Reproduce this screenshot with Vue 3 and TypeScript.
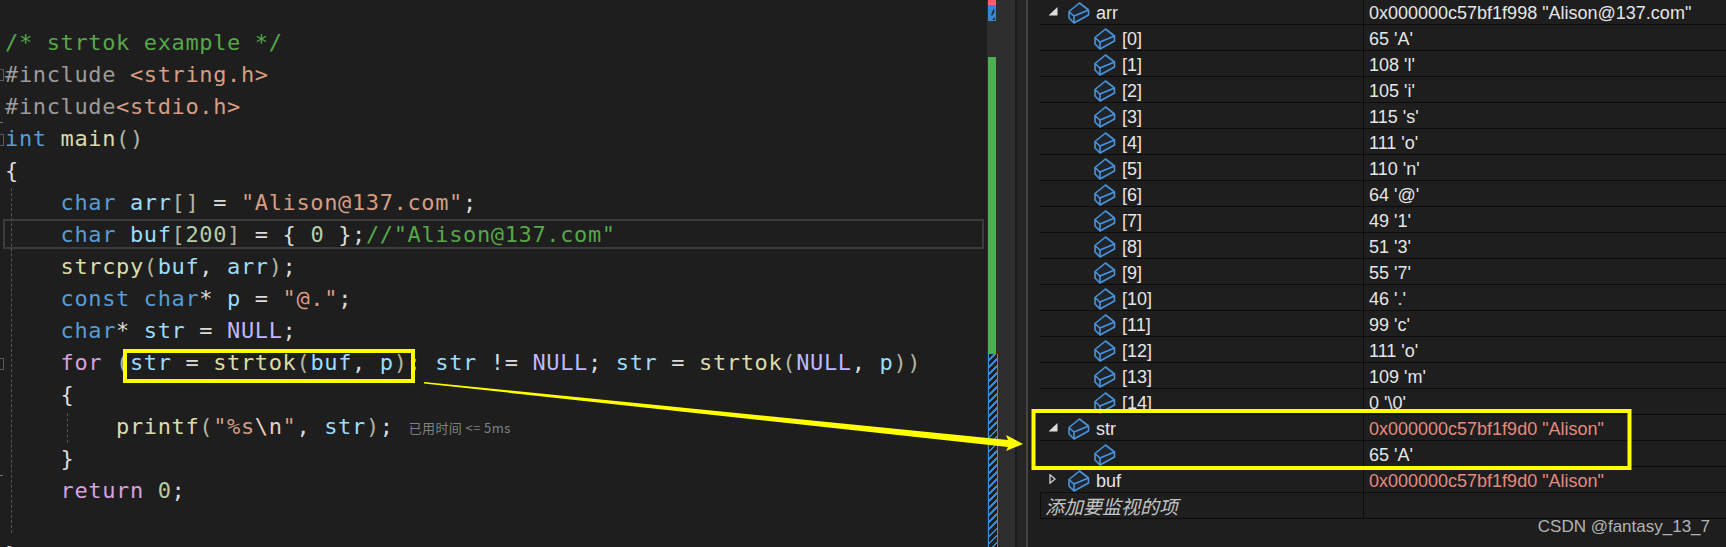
<script setup lang="ts">
type Tok = [string, string];
const code: Tok[][] = [
  [["c", "/* strtok example */"]],
  [["pp", "#include "], ["s", "<string.h>"]],
  [["pp", "#include"], ["s", "<stdio.h>"]],
  [["k", "int"], ["p", " "], ["f", "main"], ["b", "()"]],
  [["p", "{"]],
  [["p", "    "], ["k", "char"], ["p", " "], ["v", "arr"], ["b", "[]"], ["p", " = "], ["s", "\"Alison@137.com\""], ["p", ";"]],
  [["p", "    "], ["k", "char"], ["p", " "], ["v", "buf"], ["b", "["], ["n", "200"], ["b", "]"], ["p", " = { "], ["n", "0"], ["p", " };"], ["c", "//\"Alison@137.com\""]],
  [["p", "    "], ["f", "strcpy"], ["b", "("], ["v", "buf"], ["p", ", "], ["v", "arr"], ["b", ")"], ["p", ";"]],
  [["p", "    "], ["k", "const"], ["p", " "], ["k", "char"], ["p", "* "], ["v", "p"], ["p", " = "], ["s", "\"@.\""], ["p", ";"]],
  [["p", "    "], ["k", "char"], ["p", "* "], ["v", "str"], ["p", " = "], ["m", "NULL"], ["p", ";"]],
  [["p", "    "], ["r", "for"], ["p", " "], ["b", "("], ["v", "str"], ["p", " = "], ["f", "strtok"], ["b", "("], ["v", "buf"], ["p", ", "], ["v", "p"], ["b", ")"], ["p", "; "], ["v", "str"], ["p", " != "], ["m", "NULL"], ["p", "; "], ["v", "str"], ["p", " = "], ["f", "strtok"], ["b", "("], ["m", "NULL"], ["p", ", "], ["v", "p"], ["b", "))"]],
  [["p", "    {"]],
  [["p", "        "], ["f", "printf"], ["b", "("], ["s", "\"%s"], ["e", "\\n"], ["s", "\""], ["p", ", "], ["v", "str"], ["b", ")"], ["p", ";"]],
  [["p", "    }"]],
  [["p", "    "], ["r", "return"], ["p", " "], ["n", "0"], ["p", ";"]],
  [["p", " "]],
  [["p", "}"]],
];

interface Row { name: string; value: string; level: number; tri?: "open" | "closed"; changed?: boolean }
const chars: [string, string][] = [
  ["[0]", "65 'A'"], ["[1]", "108 'l'"], ["[2]", "105 'i'"], ["[3]", "115 's'"], ["[4]", "111 'o'"],
  ["[5]", "110 'n'"], ["[6]", "64 '@'"], ["[7]", "49 '1'"], ["[8]", "51 '3'"], ["[9]", "55 '7'"],
  ["[10]", "46 '.'"], ["[11]", "99 'c'"], ["[12]", "111 'o'"], ["[13]", "109 'm'"], ["[14]", "0 '\\0'"],
];
const rows: Row[] = [
  { name: "arr", value: "0x000000c57bf1f998 \"Alison@137.com\"", level: 0, tri: "open" },
  ...chars.map(([name, value]): Row => ({ name, value, level: 1 })),
  { name: "str", value: "0x000000c57bf1f9d0 \"Alison\"", level: 0, tri: "open", changed: true },
  { name: "", value: "65 'A'", level: 1 },
  { name: "buf", value: "0x000000c57bf1f9d0 \"Alison\"", level: 0, tri: "closed", changed: true },
];
</script>

<template>
  <div class="screen">
    <section class="editor">
      <div class="lines">
        <div v-for="(line, i) in code" :key="i" class="line" :class="{ current: i === 6 }">
          <span v-for="(t, j) in line" :key="j" :class="t[0]">{{ t[1] }}</span>
          <span v-if="i === 12" class="hint">已用时间 &lt;= 5ms</span>
        </div>
      </div>
      <i class="guide outer"></i>
      <i class="guide inner"></i>
      <i class="fold f1"></i>
      <i class="fold f2"></i>
      <i class="fold f3"></i>
      <i class="tick t1"></i>
      <i class="tick t2"></i>
    </section>

    <aside class="overview">
      <div class="mark red"></div>
      <div class="mark blue">
        <svg width="8" height="16" viewBox="0 0 8 16"><path d="M3 10 L6 3 L6.5 7 L4 11Z M4 15 L7 12 V15Z" fill="#1c2c3c" /></svg>
      </div>
      <div class="mark green"></div>
      <div class="mark hatch"></div>
    </aside>
    <div class="gap"></div>
    <div class="split"></div>

    <section class="watch">
      <div v-for="r in rows" :key="r.name + r.value" class="row">
        <div class="name" :class="'lv' + r.level">
          <span v-if="r.level === 0" class="tri">
            <svg width="10" height="10" viewBox="0 0 10 10">
              <path v-if="r.tri === 'open'" d="M9.5 1 V9.5 H0.5 Z" fill="#dcdcdc" />
              <path v-else d="M2 0.8 L7 5 L2 9.2 Z" fill="none" stroke="#c8c8c8" stroke-width="1.4" />
            </svg>
          </span>
          <svg class="cube" width="22" height="22" viewBox="0 0 22 22">
            <path d="M1 9.5 L11.5 1 L20.5 8 V13 L6 21 L1 16 Z" fill="#1f252d" stroke="#4a94dc" stroke-width="1.6" stroke-linejoin="round" />
            <path d="M1 9.5 L6 14 L20.5 8 M6 14 V21" fill="none" stroke="#4a94dc" stroke-width="1.6" />
          </svg>
          <span class="label">{{ r.name }}</span>
        </div>
        <div class="value" :class="{ changed: r.changed }">{{ r.value }}</div>
      </div>
      <div class="row add">
        <div class="name">添加要监视的项</div>
        <div class="value"></div>
      </div>
      <div class="mark-text">CSDN @fantasy_13_7</div>
    </section>

    <svg class="overlay" width="1726" height="547" viewBox="0 0 1726 547">
      <rect x="125" y="351" width="288" height="30" fill="none" stroke="#ffff00" stroke-width="4" />
      <rect x="1033.5" y="411" width="596" height="57" fill="none" stroke="#ffff00" stroke-width="4" />
      <path d="M424 382 L1008 440 L1006 435 L1023 444 L1006 451 L1008 447 L424 383.5 Z" fill="#ffff00" />
    </svg>
  </div>
</template>

<style scoped>
.screen {
  position: relative;
  display: flex;
  width: 1726px;
  height: 547px;
  overflow: hidden;
  background: #1e1e1e;
}
.editor {
  position: relative;
  flex: none;
  width: 987px;
  overflow: hidden;
}
.lines {
  padding: 27px 0 0 5px;
  font-family: "DejaVu Sans Mono", monospace;
  font-size: 22px;
  letter-spacing: 0.63px;
  line-height: 32px;
  color: #dcdcdc;
}
.line {
  position: relative;
  height: 32px;
  white-space: pre;
}
.current::after {
  content: "";
  position: absolute;
  left: -2px;
  right: 3px;
  top: 0;
  bottom: 2px;
  border: 2px solid #3c3c3c;
}
.c { color: #57a64a; }
.pp { color: #9b9b9b; }
.s { color: #d69d85; }
.e { color: #e8d0c0; }
.k { color: #569cd6; }
.f { color: #dcdcaa; }
.v { color: #9cdcfe; }
.b { color: #b4b4a0; }
.n { color: #b5cea8; }
.m { color: #beb7ff; }
.r { color: #d8a0df; }
.p { color: #dcdcdc; }
.hint {
  margin-left: 15px;
  font-family: "Noto Sans CJK SC", "Liberation Sans", sans-serif;
  font-size: 13px;
  letter-spacing: 0.4px;
  color: #808080;
  vertical-align: 1px;
}
.guide {
  position: absolute;
  border-left: 1px dashed #555;
}
.outer { left: 11px; top: 188px; height: 345px; }
.inner { left: 67px; top: 413px; height: 30px; }
.fold {
  position: absolute;
  left: 0;
  width: 3px;
  height: 10px;
  border: 1px solid #5a5a5a;
  border-left: none;
}
.f1 { top: 69px; }
.f2 { top: 134px; }
.f3 { top: 358px; }
.tick {
  position: absolute;
  left: 0;
  width: 3px;
  height: 1px;
  background: #777;
}
.t1 { top: 122px; }
.t2 { top: 475px; }

.overview {
  flex: none;
  display: flex;
  flex-direction: column;
  width: 28px;
  background: #2e2e2e;
}
.mark {
  width: 8px;
  margin-left: 1px;
}
.red { height: 5px; background: #f4646a; flex: none; }
.blue { height: 16px; background: #3a87d0; flex: none; }
.blue svg { display: block; }
.green { height: 297px; margin-top: 36px; background: #4caf50; flex: none; }
.hatch {
  flex: 1;
  border-left: 1px solid #3a8ad6;
  border-right: 1px solid #3a8ad6;
  background: repeating-linear-gradient(135deg, #1e1e1e 0 3px, #3a8ad6 3px 5px);
}
.gap {
  flex: none;
  width: 11px;
  background: #252525;
  border-left: 2px solid #1a1a1a;
  box-sizing: border-box;
}
.split {
  flex: none;
  width: 2px;
  background: #454545;
}
.watch {
  position: relative;
  flex: 1;
  min-width: 0;
  margin-top: -1px;
  padding-left: 12px;
  font-family: "Liberation Sans", Arial, sans-serif;
  font-size: 18px;
  color: #e6e6e6;
}
.row {
  display: flex;
  height: 26px;
  box-sizing: border-box;
  border-bottom: 1px solid #0c0c0c;
  line-height: 25px;
}
.name {
  flex: none;
  display: flex;
  align-items: flex-start;
  width: 323px;
  height: 25px;
}
.lv1 { padding-left: 54px; box-sizing: border-box; }
.tri {
  flex: none;
  display: flex;
  width: 28px;
  padding-left: 8px;
  box-sizing: border-box;
  margin-top: 7px;
}
.tri svg { display: block; }
.cube { flex: none; margin-top: 3px; position: relative; }
.label { margin-left: 6px; padding-top: 2px; }
.value {
  flex: 1;
  border-left: 1px solid #0c0c0c;
  padding: 2px 0 0 5px;
  white-space: pre;
}
.changed { color: #e58a7d; }
.add .name {
  align-items: center;
  border-left: 1px solid #0c0c0c;
  box-sizing: border-box;
  padding-left: 4px;
  font-family: "Noto Sans CJK SC", "Liberation Sans", sans-serif;
  font-size: 19px;
  font-style: italic;
  color: #c4c4c4;
}
.mark-text {
  position: absolute;
  right: 16px;
  top: 517px;
  font-size: 17px;
  line-height: 22px;
  color: #b4b4b4;
}
.overlay {
  position: absolute;
  left: 0;
  top: 0;
  pointer-events: none;
}
</style>

<style>
html, body { background: #1e1e1e; }
</style>
